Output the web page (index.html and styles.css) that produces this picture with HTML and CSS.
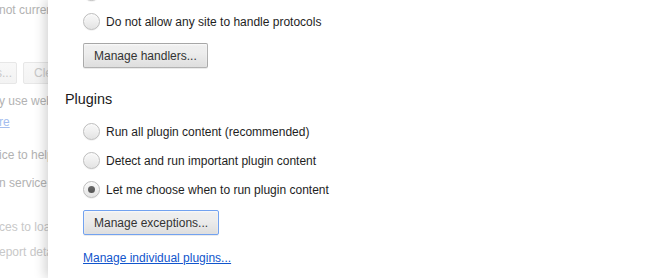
FILE: index.html
```html
<!DOCTYPE html>
<html lang="en">
<head>
<meta charset="utf-8">
<title>Content settings</title>
<link rel="stylesheet" href="styles.css">
</head>
<body>
<div class="page">
  <div class="bg-line bg-l1">not currently</div>
  <div class="bg-buttons">
    <span class="bg-btn bg-btn-first">Content settings...</span>
    <span class="bg-btn bg-btn-second">Clear browsing data...</span>
  </div>
  <div class="bg-line bg-l2">y use web services</div>
  <div class="bg-line bg-l3"><span class="bg-link">re</span></div>
  <div class="bg-line bg-l4">ice to help resolve</div>
  <div class="bg-line bg-l5">n service</div>
  <div class="bg-line bg-l6 bg-light">ces to load pages</div>
  <div class="bg-line bg-l7 bg-light">eport details</div>
</div>

<div class="dialog">
  <div class="dialog-scroll">
    <label class="radio-row"><span class="radio"></span><span class="radio-label">Allow sites to ask to become default handlers for protocols</span></label>
    <label class="radio-row"><span class="radio"></span><span class="radio-label">Do not allow any site to handle protocols</span></label>
    <div class="btn-row"><button class="btn">Manage handlers...</button></div>

    <h3 class="section-title">Plugins</h3>
    <label class="radio-row"><span class="radio"></span><span class="radio-label">Run all plugin content (recommended)</span></label>
    <label class="radio-row"><span class="radio"></span><span class="radio-label">Detect and run important plugin content</span></label>
    <label class="radio-row"><span class="radio checked"></span><span class="radio-label">Let me choose when to run plugin content</span></label>
    <div class="btn-row btn-row-tight"><button class="btn btn-focus">Manage exceptions...</button></div>
    <div class="link-row"><a class="link" href="#">Manage individual plugins...</a></div>
  </div>
</div>
</body>
</html>
```

FILE: styles.css
```css
html, body {
  margin: 0;
  padding: 0;
}

body {
  width: 650px;
  height: 278px;
  overflow: hidden;
  position: relative;
  background: #ffffff;
  font-family: "Liberation Sans", Arial, sans-serif;
  font-size: 12px;
  color: #303030;
}

/* ---------- faded settings page behind the overlay ---------- */
.page {
  width: 50px;
  height: 278px;
  overflow: hidden;
  color: #b2b2b2;
  white-space: nowrap;
}

.bg-line {
  height: 18px;
  line-height: 18px;
  margin-left: -1px;
}

.bg-l1 { margin-top: 1px; }
.bg-l2 { margin-top: 8px; }
.bg-l3 { margin-top: 3px; }
.bg-l4 { margin-top: 15px; }
.bg-l5 { margin-top: 10px; }
.bg-l6 { margin-top: 26px; }
.bg-l7 { margin-top: 7px; }

.bg-light {
  color: #c8c8c8;
}

.bg-link {
  color: #a3bdee;
  text-decoration: underline;
}

.bg-buttons {
  margin-top: 43px;
  height: 22px;
  display: flex;
  gap: 6px;
}

.bg-btn {
  box-sizing: border-box;
  flex: none;
  height: 22px;
  line-height: 20px;
  border: 1px solid #e7e7e7;
  border-radius: 2px;
  background: linear-gradient(#f8f8f8, #f3f3f3);
  color: #c8c8c8;
}

.bg-btn-first {
  margin-left: -96px;
  width: 113px;
  text-align: right;
  padding-right: 4px;
}

.bg-btn-second {
  padding-left: 10px;
  width: 150px;
}

/* ---------- overlay dialog ---------- */
.dialog {
  position: absolute;
  top: 0;
  left: 48px;
  right: 0;
  bottom: 0;
  background: #ffffff;
  box-shadow: -3px 0 11px rgba(0, 0, 0, 0.18);
  overflow: hidden;
}

.dialog-scroll {
  margin-top: -22px;
  padding-left: 17px;
}

.radio-row {
  display: flex;
  align-items: center;
  height: 29px;
  margin-left: 18px;
  white-space: nowrap;
}

.radio {
  box-sizing: border-box;
  flex: none;
  width: 17px;
  height: 17px;
  border-radius: 50%;
  border: 1px solid #bdbdbd;
  background: linear-gradient(#f7f7f7, #f1f1f1 40%, #e3e3e3);
  box-shadow: 0 1px 0 rgba(0, 0, 0, 0.05), inset 0 1px 2px rgba(255, 255, 255, 0.8);
  display: flex;
  align-items: center;
  justify-content: center;
}

.radio.checked::after {
  content: "";
  width: 7px;
  height: 7px;
  border-radius: 50%;
  background: linear-gradient(#6a6a6a, #545454);
}

.radio-label {
  margin-left: 6px;
  color: #1e1e1e;
}

.btn-row {
  margin-top: 7px;
  margin-left: 18px;
  height: 25px;
}

.btn-row-tight {
  margin-top: 6px;
}

.btn {
  box-sizing: border-box;
  height: 25px;
  padding: 0 10px;
  font-family: "Liberation Sans", Arial, sans-serif;
  font-size: 12px;
  color: #333333;
  border: 1px solid rgba(0, 0, 0, 0.25);
  border-radius: 2px;
  background: linear-gradient(#efefef, #ededed 38%, #dedede);
  box-shadow: 0 1px 0 rgba(0, 0, 0, 0.08), inset 0 1px 2px rgba(255, 255, 255, 0.75);
  margin: 0;
}

.btn-focus {
  border-color: #72a2f0;
}

.section-title {
  margin: 21px 0 8px 0;
  height: 20px;
  line-height: 20px;
  font-size: 14.4px;
  font-weight: normal;
  color: #1a1a1a;
}

.link-row {
  margin-top: 14px;
  margin-left: 18px;
  line-height: 18px;
}

.link {
  color: #1155cc;
  text-decoration: underline;
}
```
